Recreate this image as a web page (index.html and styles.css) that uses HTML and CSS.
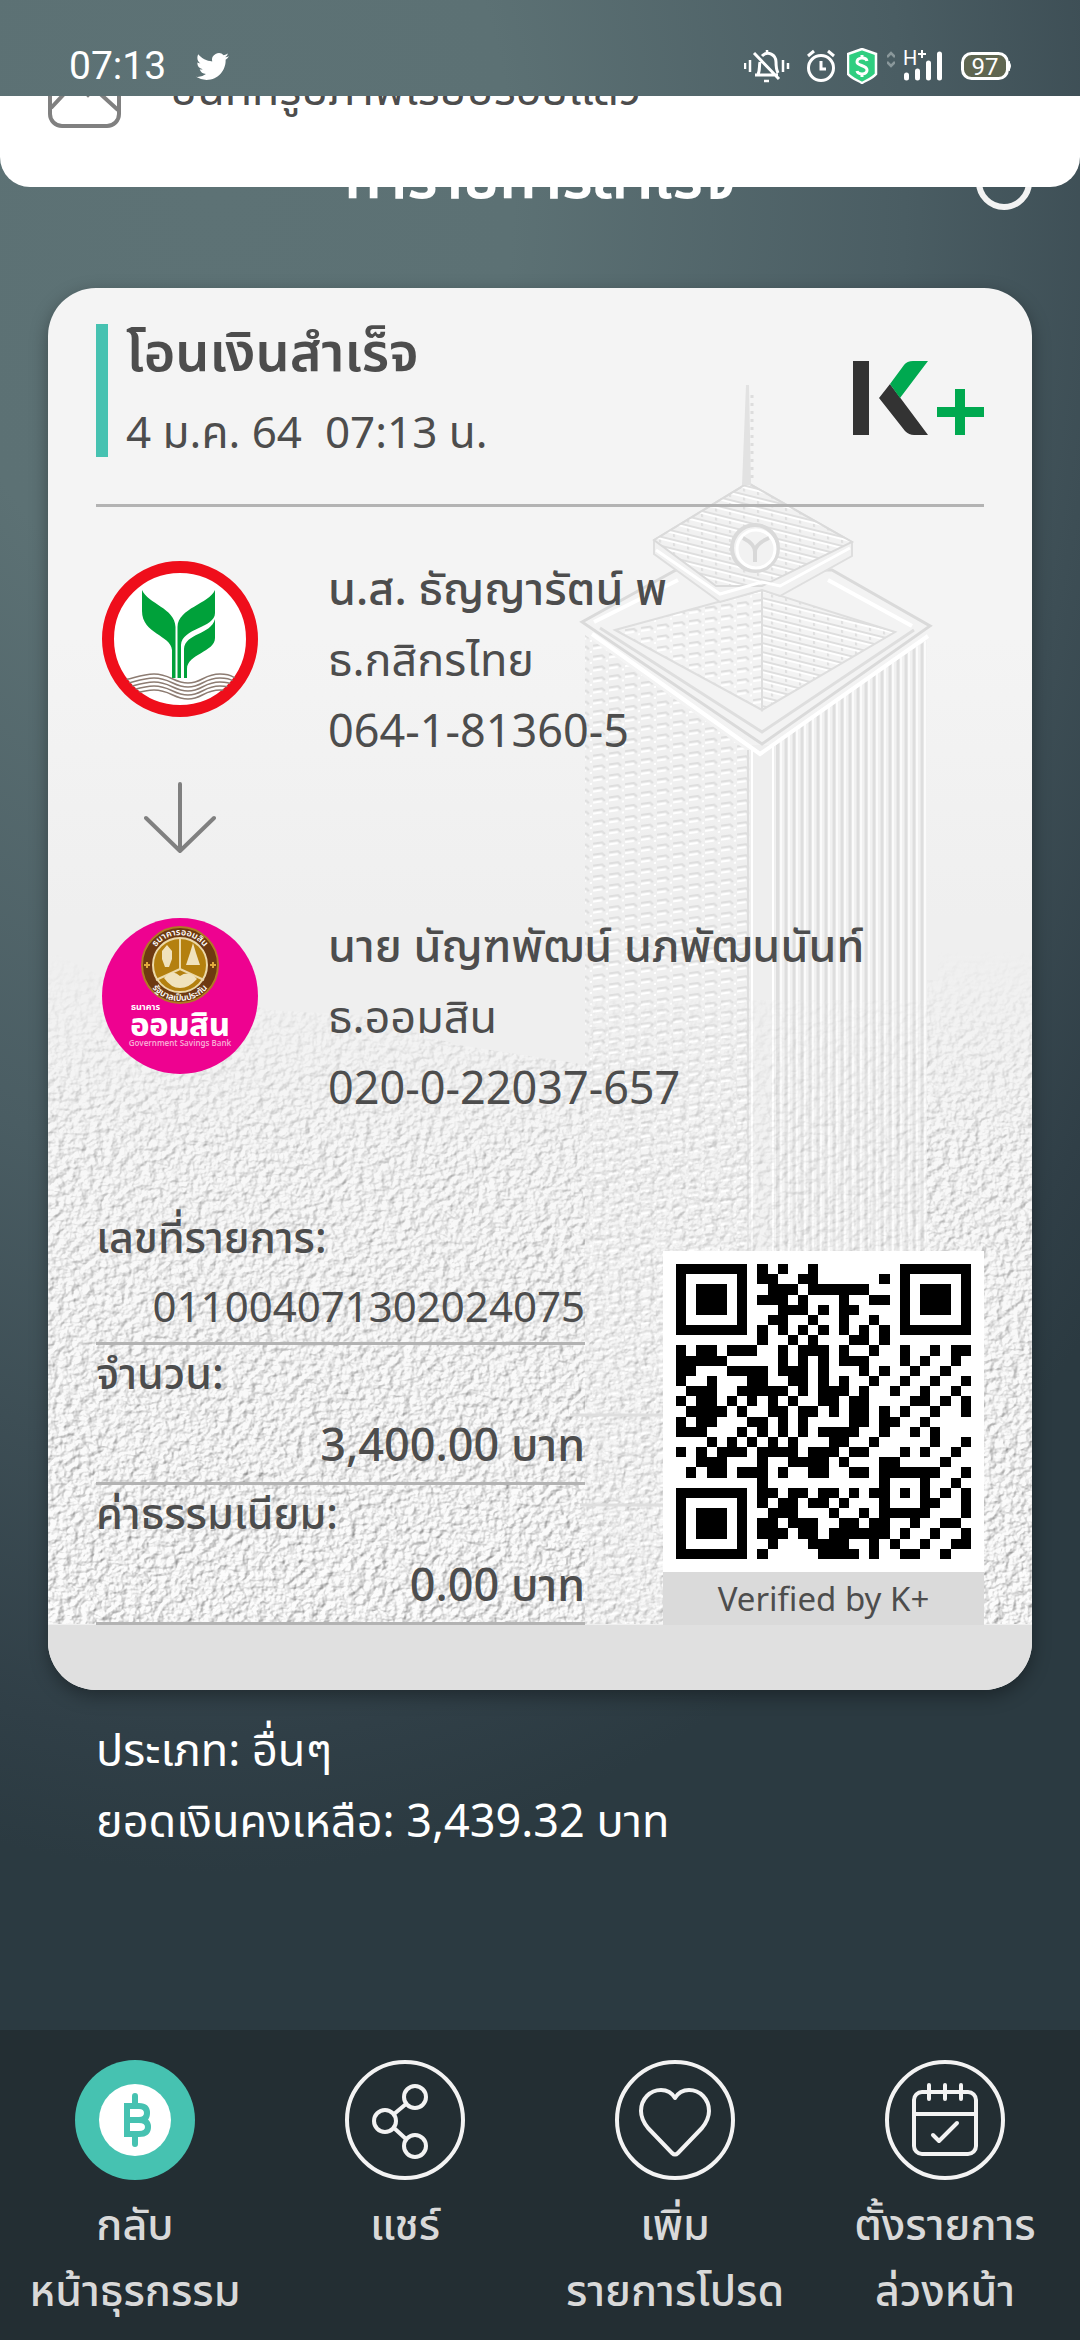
FILE: index.html
```html
<!DOCTYPE html>
<html lang="th">
<head>
    <meta charset="UTF-8">
    <meta name="viewport" content="width=device-width, initial-scale=1.0">
    <title>ทำรายการสำเร็จ</title>
    <link rel="stylesheet" href="styles.css">
</head>
<body>
    <div class="status-bar">
        <span class="clock">07:13</span>
        <svg class="bird" width="33" height="33" viewBox="0 0 24 24" fill="#fff"><path d="M23.95 4.57a10 10 0 0 1-2.82.77 4.96 4.96 0 0 0 2.16-2.72c-.95.55-2 .95-3.13 1.18a4.92 4.92 0 0 0-8.38 4.48C7.69 8.1 4.07 6.13 1.64 3.16a4.82 4.82 0 0 0-.67 2.48c0 1.7.87 3.21 2.19 4.1a4.9 4.9 0 0 1-2.23-.62v.06a4.92 4.92 0 0 0 3.95 4.83 5 5 0 0 1-2.21.08 4.94 4.94 0 0 0 4.6 3.42A9.87 9.87 0 0 1 0 19.54a13.99 13.99 0 0 0 7.55 2.21c9.05 0 14-7.5 14-13.98 0-.21 0-.42-.02-.63a9.94 9.94 0 0 0 2.46-2.55z"/></svg>
        <div class="status-icons">
            <svg width="55" height="36" viewBox="0 0 55 36" fill="none" stroke="#fff" stroke-width="3">
                <path d="M1 15v6M6 12v12M39 12v12M44 15v6M23 4V2M20 33h5" stroke-width="2.5"/>
                <path d="M11 27h23M14 26c2-3 1-8 2-12M18 8c6-6 14-1 14 6 0 5 0 7 2 11M10 5l25 26"/>
            </svg>
            <svg width="32" height="36" viewBox="0 0 32 36" fill="none" stroke="#fff" stroke-width="3">
                <circle cx="14" cy="20" r="12.500"/>
                <path d="M14 13v8h5M1 8l6-5M27 8l-6-5"/>
            </svg>
            <svg width="32" height="36" viewBox="0 0 32 36">
                <path d="M15 1l14 5v20c-3 4-9 6-14 9-5-3-11-5-14-9V6z" fill="#2fce80" stroke="#fff" stroke-width="2.500"/>
                <path d="M20 13c-1-4-10-4-10 1 0 4 10 3 10 8 0 5-9 5-10 1M15 7v3M15 26v3" fill="none" stroke="#fff" stroke-width="3"/>
            </svg>
            <svg width="8" height="36" viewBox="0 0 8 36" fill="none" stroke="#8a989b" stroke-width="2.500"><path d="M0 9l4-4 4 4M0 14l4 4 4-4"/></svg>
            <svg width="50" height="36" viewBox="0 0 50 36">
                <text x="0" y="17" class="network">H</text>
                <path d="M15 6h8M19 2v8" stroke="#fff" stroke-width="2"/>
                <path d="M3.500 27v3M14.500 23v7M25.500 15v15M36.500 6v24" stroke="#fff" stroke-width="5" stroke-linecap="round"/>
            </svg>
            <svg width="50" height="36" viewBox="0 0 50 36">
                <rect x="1.500" y="5.500" width="45" height="25" rx="9" fill="#5f6650" stroke="#fff" stroke-width="3"/>
                <path d="M48 13q3 5 0 10z" fill="#fff" stroke="#fff"/>
                <text x="24" y="27" text-anchor="middle" class="battery">97</text>
            </svg>
        </div>
    </div>

    <div class="toast">
        <svg width="74" height="72" viewBox="0 0 74 72" fill="none" stroke="#808080" stroke-width="4">
            <rect x="2" y="2" width="69" height="68" rx="12"/>
            <path d="M3 52L29 24q4-4 8 0l33 30M33 32l7 7 14-14"/>
        </svg>
        <span class="toast-text">บันทึกรูปภาพเรียบร้อยแล้ว</span>
    </div>

    <header class="page-header">
        <h1 class="page-title">ทำรายการสำเร็จ</h1>
        <button class="header-btn" aria-label="home"></button>
    </header>

    <main class="slip">
        <svg class="slip-art" viewBox="48 288 984 1336" preserveAspectRatio="xMidYMin slice">
            <defs>
                <filter id="emboss" x="0" y="0" width="100%" height="100%" color-interpolation-filters="sRGB">
                    <feTurbulence type="fractalNoise" baseFrequency="0.13 0.16" numOctaves="3" seed="4"/>
                    <feDiffuseLighting surfaceScale="2" diffuseConstant="1.09" lighting-color="#fff">
                        <feDistantLight azimuth="215" elevation="60"/>
                    </feDiffuseLighting>
                </filter>
                <linearGradient id="fade" x1="0" y1="0" x2="0" y2="1">
                    <stop offset="0" stop-color="#000"/>
                    <stop offset=".3" stop-color="#aaa"/>
                    <stop offset="1" stop-color="#fff"/>
                </linearGradient>
                <mask id="city"><path d="M48 950l60 30 100 10 60 20 90 5 100 30 130 20V980h350v-30h94v674H48z" fill="url(#fade)"/></mask>
                <pattern id="windows" width="16" height="11" patternUnits="userSpaceOnUse" patternTransform="skewY(-8)">
                    <path d="M1 3h9l3 3" fill="none" stroke="#dedede" stroke-width="2"/>
                    <path d="M1 6h9M14 9h2" fill="none" stroke="#fff" stroke-width="2"/>
                </pattern>
                <pattern id="columns" width="8" height="20" patternUnits="userSpaceOnUse">
                    <path d="M2 0v20" stroke="#dedede" stroke-width="3"/>
                    <path d="M5 0v20" stroke="#fbfbfb" stroke-width="2"/>
                </pattern>
                <pattern id="slats" width="14" height="9" patternUnits="userSpaceOnUse" patternTransform="skewY(14)">
                    <path d="M0 3h14M2 3v6" stroke="#dedede" stroke-width="2"/>
                    <path d="M0 5h14" stroke="#fff" stroke-width="2"/>
                </pattern>
            </defs>
            <rect x="48" y="900" width="984" height="724" filter="url(#emboss)" mask="url(#city)" opacity=".8"/>
            <!-- tower body -->
            <path d="M585 635l165 118v871H585z" fill="#efefef" opacity=".75"/>
            <path d="M585 635l165 118v871H585z" fill="url(#windows)"/>
            <path d="M775 742l152-102v984H775z" fill="#f1f1f1"/>
            <path d="M775 742l152-102v984H775z" fill="url(#columns)"/>
            <path d="M750 745h25v879h-25z" fill="#eee"/>
            <path d="M748 750v874M777 745v879" stroke="#dedede" stroke-width="2"/>
            <path d="M752 750v874M773 745v879" stroke="#fff" stroke-width="2"/>
            <rect x="585" y="1000" width="345" height="624" filter="url(#emboss)" mask="url(#city)" opacity=".4"/>
            <!-- roof -->
            <path d="M582 622l94-52h156l98 56-168 118z" fill="#f3f3f3" stroke="#dadada" stroke-width="3"/>
            <path d="M594 622l84-42M912 626l-84-46M592 634l168 120 168-118" fill="none" stroke="#fff" stroke-width="4"/>
            <path d="M600 628l162 104 152-102" fill="none" stroke="#dedede" stroke-width="3"/>
            <path d="M615 630l147-40v120z" fill="url(#windows)" stroke="#dedede" stroke-width="2"/>
            <path d="M895 632l-133-42v120z" fill="url(#slats)" stroke="#dedede" stroke-width="2"/>
            <path d="M654 540l94-57 104 59v14l-72 40-18-6-42 12-66-48z" fill="#f1f1f1" stroke="#dedede" stroke-width="2"/>
            <path d="M654 540l94-57 104 59-90 44h-46z" fill="url(#slats)" stroke="#dadada" stroke-width="2"/>
            <path d="M656 550l64 44 42-12 18 4 70-38" fill="none" stroke="#fff" stroke-width="3"/>
            <path d="M742 485l4-100h3l2 100z" fill="#e2e2e2"/>
            <path d="M752 395v88" stroke="#ddd" stroke-width="3" stroke-dasharray="3 5"/>
            <circle cx="755" cy="548" r="23" fill="#f2f2f2" stroke="#dadada" stroke-width="4"/>
            <circle cx="756" cy="549" r="19" fill="none" stroke="#fff" stroke-width="3"/>
            <path d="M755 562v-10q0-8-12-14M755 552q0-8 14-14" fill="none" stroke="#d8d8d8" stroke-width="4"/>
            <!-- podium -->
            <path d="M570 1415h370M580 1505h360" stroke="#dedede" stroke-width="3"/>
        </svg>

        <div class="slip-content">
            <div class="slip-header">
                <div class="slip-title">
                    <h2>โอนเงินสำเร็จ</h2>
                    <p>4 ม.ค. 64&nbsp; 07:13 น.</p>
                </div>
                <svg class="kplus" width="131" height="74" viewBox="0 0 131 74">
                    <path d="M0 0h16v74H0zM26 37l11-14 38 51H61q-5 0-9-4z" fill="#333"/>
                    <path d="M37 23L51 4q3-4 9-4h15L47 37zM102 28h10v18h19v10h-19v18h-10V56H84V46h18z" fill="#00a950"/>
                </svg>
            </div>

            <section class="account">
                <svg class="bank-logo" width="156" height="156" viewBox="0 0 156 156">
                    <clipPath id="disc"><circle cx="78" cy="78" r="67"/></clipPath>
                    <circle cx="78" cy="78" r="72" fill="#fff" stroke="#ef0e1b" stroke-width="12"/>
                    <path d="M40 29c6 14 33 18 33.500 37v51H70V89C69 74 40 73 40 50z" fill="#00a13a"/>
                    <path d="M113 29c-6 14-37 18-37.500 37v51H79V84c1-17 34-17 34-32z" fill="#00a13a"/>
                    <path d="M113 58v19c0 14-28 16-28 31v9h-3V88c1-16 27-14 31-30z" fill="#00a13a"/>
                    <g clip-path="url(#disc)" fill="none" stroke="#8d7c72" stroke-width="1.500">
                        <path d="M14 119c12 2 22-6 38-6s20 9 34 9 16-9 32-9 12 6 24 6"/>
                        <path d="M14 123c12 2 22-6 38-6s20 9 34 9 16-9 32-9 12 6 24 6"/>
                        <path d="M14 127c12 2 22-6 38-6s20 9 34 9 16-9 32-9 12 6 24 6"/>
                        <path d="M14 131c12 2 22-6 38-6s20 9 34 9 16-9 32-9 12 6 24 6"/>
                        <path d="M14 135c12 2 22-6 38-6s20 9 34 9 16-9 32-9 12 6 24 6"/>
                    </g>
                </svg>
                <div class="account-info">
                    <p class="account-name">น.ส. ธัญญารัตน์ พ</p>
                    <p>ธ.กสิกรไทย</p>
                    <p>064-1-81360-5</p>
                </div>
            </section>

            <div class="arrow">
                <svg width="72" height="72" viewBox="0 0 72 72" fill="none" stroke="#808080" stroke-width="4" stroke-linecap="round" stroke-linejoin="round"><path d="M36 2v67M2 36l34 33 34-33"/></svg>
            </div>

            <section class="account">
                <svg class="bank-logo" width="156" height="156" viewBox="0 0 156 156">
                    <circle cx="78" cy="78" r="78" fill="#ee0290"/>
                    <circle cx="78" cy="47" r="38" fill="#6e3a10" stroke="#b07a24" stroke-width="2"/>
                    <circle cx="78" cy="47" r="27" fill="#b4800f" stroke="#ecd9a8" stroke-width="2"/>
                    <path d="M78 20v31M78 51L54 62M78 51l24 11" stroke="#ecd9a8" stroke-width="2"/>
                    <path d="M65 27l5 6v8l-3 8h-4l-3-8v-8zM91 25l3 10 4 12H84l4-12zM62 60q8-10 16-2 9-6 17 3-8 9-17 9t-16-10z" fill="#f0e2bd"/>
                    <path d="M42 47h6M45 44v6M108 47h6M111 44v6" stroke="#e0a83c" stroke-width="2"/>
                    <path id="seal-top" d="M48 47a30 30 0 0 1 60 0" fill="none"/>
                    <path id="seal-bottom" d="M42 47a36 36 0 0 0 72 0" fill="none"/>
                    <text class="seal"><textPath href="#seal-top" startOffset="50%" text-anchor="middle">ธนาคารออมสิน</textPath></text>
                    <text class="seal"><textPath href="#seal-bottom" startOffset="50%" text-anchor="middle">รัฐบาลเป็นประกัน</textPath></text>
                    <text x="29" y="92" class="gsb-small">ธนาคาร</text>
                    <text x="78" y="118" text-anchor="middle" class="gsb-name">ออมสิน</text>
                    <text x="78" y="128" text-anchor="middle" class="gsb-en">Government Savings Bank</text>
                </svg>
                <div class="account-info">
                    <p class="account-name">นาย นัญฑพัฒน์ นภพัฒนนันท์</p>
                    <p>ธ.ออมสิน</p>
                    <p>020-0-22037-657</p>
                </div>
            </section>

            <section class="details">
                <dl class="detail-list">
                    <div class="detail-row">
                        <dt>เลขที่รายการ:</dt>
                        <dd class="ref-no">011004071302024075</dd>
                    </div>
                    <div class="detail-row">
                        <dt>จำนวน:</dt>
                        <dd>3,400.00 บาท</dd>
                    </div>
                    <div class="detail-row">
                        <dt>ค่าธรรมเนียม:</dt>
                        <dd>0.00 บาท</dd>
                    </div>
                </dl>
                <figure class="qr">
                    <svg class="qr-code" viewBox="0 0 29 29" shape-rendering="crispEdges" stroke="#000" fill="none">
                        <path transform="translate(0 .5)" d="
                            M0 0h7M8 0h1M10 0h1M13 0h1M22 0h7
                            M0 1h1M6 1h1M8 1h2M12 1h2M20 1h1M22 1h1M28 1h1
                            M0 2h1M2 2h3M6 2h1M9 2h3M13 2h6M22 2h1M24 2h3M28 2h1
                            M0 3h1M2 3h3M6 3h1M8 3h3M12 3h1M16 3h1M19 3h2M22 3h1M24 3h3M28 3h1
                            M0 4h1M2 4h3M6 4h1M10 4h3M14 4h1M16 4h2M22 4h1M24 4h3M28 4h1
                            M0 5h1M6 5h1M9 5h2M13 5h1M16 5h1M19 5h1M22 5h1M28 5h1
                            M0 6h7M8 6h1M10 6h1M12 6h1M14 6h1M16 6h1M18 6h1M20 6h1M22 6h7
                            M8 7h1M11 7h1M13 7h1M17 7h2M20 7h1
                            M0 8h1M2 8h2M5 8h3M10 8h1M12 8h3M16 8h1M19 8h1M22 8h1M25 8h1M27 8h2
                            M0 9h5M10 9h1M12 9h1M14 9h1M16 9h3M22 9h1M24 9h1M27 9h1
                            M0 10h2M5 10h4M10 10h3M14 10h1M18 10h1M20 10h1M23 10h1M26 10h1
                            M0 11h1M3 11h1M7 11h2M11 11h2M14 11h1M16 11h1M19 11h1M22 11h1M25 11h1M28 11h1
                            M1 12h3M6 12h5M12 12h1M14 12h3M18 12h1M21 12h1M24 12h1M27 12h1
                            M0 13h1M2 13h2M5 13h1M7 13h1M9 13h1M11 13h1M14 13h2M17 13h2M23 13h2M26 13h1M28 13h1
                            M1 14h4M6 14h1M9 14h2M12 14h2M15 14h1M17 14h2M20 14h1M22 14h1M25 14h1M28 14h1
                            M0 15h1M2 15h2M7 15h2M10 15h1M12 15h1M17 15h2M20 15h2M24 15h1
                            M0 16h3M6 16h1M8 16h1M10 16h1M12 16h1M14 16h4M20 16h1M23 16h1M25 16h1
                            M3 17h1M5 17h1M7 17h1M9 17h1M11 17h1M15 17h2M19 17h1M25 17h1M28 17h1
                            M0 18h1M2 18h1M4 18h3M8 18h4M13 18h3M17 18h2M22 18h1M24 18h1M27 18h1
                            M2 19h3M8 19h1M11 19h4M16 19h1M20 19h2M26 19h1
                            M1 20h1M3 20h2M6 20h3M10 20h1M13 20h2M17 20h2M20 20h6M28 20h1
                            M8 21h1M20 21h1M24 21h1M27 21h1
                            M0 22h7M8 22h2M11 22h2M14 22h2M17 22h1M19 22h2M22 22h1M24 22h1M26 22h1M28 22h1
                            M0 23h1M6 23h1M8 23h1M10 23h2M13 23h2M16 23h1M20 23h1M24 23h2M28 23h1
                            M0 24h1M2 24h3M6 24h1M9 24h3M15 24h1M18 24h1M20 24h5M28 24h1
                            M0 25h1M2 25h3M6 25h1M8 25h2M11 25h3M16 25h2M19 25h2M23 25h1M26 25h2
                            M0 26h1M2 26h3M6 26h1M8 26h3M12 26h2M15 26h6M22 26h1M25 26h1M28 26h1
                            M0 27h1M6 27h1M9 27h1M13 27h4M19 27h1M21 27h1M24 27h1M27 27h2
                            M0 28h7M8 28h1M14 28h4M19 28h1M22 28h2M26 28h1"/>
                    </svg>
                    <figcaption>Verified by K+</figcaption>
                </figure>
            </section>
        </div>
    </main>

    <section class="summary">
        <p>ประเภท: อื่นๆ</p>
        <p>ยอดเงินคงเหลือ: 3,439.32 บาท</p>
    </section>

    <nav class="bottom-nav">
        <button class="nav-item">
            <svg width="120" height="120" viewBox="0 0 120 120" fill="none" stroke="#46c2b1" stroke-width="6">
                <circle cx="60" cy="60" r="60" fill="#46c2b1" stroke="none"/>
                <circle cx="60" cy="60" r="36" fill="#fff" stroke="none"/>
                <path d="M52 46h12q8 0 8 7t-8 7H52h12q9 0 9 7t-9 7H52z"/>
                <path d="M60 36v8M60 76v8" stroke-linecap="round"/>
            </svg>
            <span>กลับ<br>หน้าธุรกรรม</span>
        </button>
        <button class="nav-item">
            <svg width="120" height="120" viewBox="0 0 120 120" fill="none" stroke="#f3f3f3" stroke-width="4">
                <circle cx="60" cy="60" r="58"/>
                <circle cx="40" cy="61" r="11"/>
                <circle cx="70" cy="37" r="11"/>
                <circle cx="70" cy="86" r="11"/>
                <path d="M49 54l12-10M49 68l12 11"/>
            </svg>
            <span>แชร์</span>
        </button>
        <button class="nav-item">
            <svg width="120" height="120" viewBox="0 0 120 120" fill="none" stroke="#f3f3f3" stroke-width="4" stroke-linejoin="round">
                <circle cx="60" cy="60" r="58"/>
                <path d="M60 38c3-5 8-8 14-8 11 0 20 9 20 21 0 7-3 12-7 17L63 93q-3 3-6 0L33 68c-4-5-7-10-7-17 0-12 9-21 20-21 6 0 11 3 14 8z"/>
            </svg>
            <span>เพิ่ม<br>รายการโปรด</span>
        </button>
        <button class="nav-item">
            <svg width="120" height="120" viewBox="0 0 120 120" fill="none" stroke="#f3f3f3" stroke-width="4" stroke-linecap="round" stroke-linejoin="round">
                <circle cx="60" cy="60" r="58"/>
                <rect x="29" y="32" width="62" height="62" rx="8"/>
                <path d="M29 54h62M44 25v14M60 25v14M76 25v14M48 75l6 6 18-18"/>
            </svg>
            <span>ตั้งรายการ<br>ล่วงหน้า</span>
        </button>
    </nav>
</body>
</html>
```
FILE: styles.css
```css
* {
    box-sizing: border-box;
}

body {
    margin: 0;
    min-height: 100vh;
    display: flex;
    flex-direction: column;
    position: relative;
    font-family: "Noto Sans", "Noto Sans Thai", sans-serif;
    font-size: 45px;
    line-height: 71px;
    color: #4d4d4d;
    background: radial-gradient(ellipse 110% 72% at 20% 8%, #5d7275 0%, #5c7174 25%, #4a5d63 58%, #303f47 92%, #2b3a41 100%);
}

h1, h2, p, dl, dd, figure {
    margin: 0;
}

svg {
    display: block;
}

button {
    border: none;
    background: none;
    padding: 0;
    font: inherit;
    color: inherit;
    cursor: pointer;
}

/* status bar */
.status-bar {
    height: 96px;
    padding: 36px 69px 0;
    display: flex;
    align-items: center;
    color: #fff;
}

.clock {
    font-family: Roboto, sans-serif;
    font-size: 39px;
}

.bird {
    margin-left: 30px;
}

.status-icons {
    margin-left: auto;
    display: flex;
    gap: 8px;
}

.network, .battery {
    font-family: Roboto, sans-serif;
    font-size: 20px;
    fill: #fff;
}

.battery {
    font-size: 24px;
}

.toast {
    position: absolute;
    top: 96px;
    left: 0;
    right: 0;
    height: 91px;
    padding: 0 48px 59px;
    display: flex;
    align-items: flex-end;
    gap: 48px;
    overflow: hidden;
    background: #fff;
    border-radius: 0 0 30px 30px;
}

.toast svg {
    flex: none;
}

.toast-text {
    line-height: 80px;
}

.page-header {
    height: 192px;
    padding: 58px 48px 0;
    display: flex;
    align-items: flex-start;
    justify-content: center;
    color: #fff;
}

.page-title {
    flex: 1;
    margin-left: 56px;
    text-align: center;
    font-size: 60px;
    font-weight: 600;
    line-height: 42px;
}

.header-btn {
    width: 56px;
    height: 56px;
    border: 6px solid #f3f3f3;
    border-radius: 50%;
}

/* slip card */
.slip {
    position: relative;
    margin: 0 48px;
    padding: 36px 48px 65px;
    background: linear-gradient(#f4f4f4 25%, #efefef 45%);
    border-radius: 48px;
    box-shadow: 0 6px 18px rgba(0, 0, 0, 0.35);
    overflow: hidden;
}

.slip::after {
    content: "";
    position: absolute;
    left: 0;
    right: 0;
    bottom: 0;
    height: 65px;
    background: #e0e0e0;
}

.slip-art {
    position: absolute;
    top: 0;
    left: 0;
    width: 100%;
}

.slip-content {
    position: relative;
}

.slip-header {
    display: flex;
    justify-content: space-between;
    align-items: center;
    padding-bottom: 47px;
    border-bottom: 3px solid #b3b3b3;
}

.slip-title {
    padding-left: 18px;
    border-left: 12px solid #46c2b1;
}

.slip-title h2 {
    font-size: 54px;
    font-weight: 600;
    line-height: 52px;
    margin-bottom: 29px;
}

.slip-title p {
    font-size: 44px;
    line-height: 52px;
}

.kplus {
    margin-top: 14px;
}

.account {
    display: flex;
    align-items: flex-start;
    gap: 70px;
    padding-left: 6px;
}

.slip-header + .account {
    margin-top: 45px;
}

.bank-logo {
    flex: none;
    margin-top: 9px;
}

.account-name {
    font-weight: 500;
}

.arrow {
    width: 168px;
    padding: 17px 0 55px;
    display: flex;
    justify-content: center;
}

.seal {
    font-size: 9px;
    font-weight: 600;
    fill: #fff;
}

.gsb-small {
    font-size: 9px;
    font-weight: 700;
    fill: #fff;
}

.gsb-name {
    font-size: 32px;
    font-weight: 800;
    fill: #fff;
}

.gsb-en {
    font-size: 8px;
    font-weight: 600;
    fill: #f9a8d4;
}

/* details and qr */
.details {
    margin-top: 87px;
    display: flex;
    justify-content: space-between;
    align-items: flex-end;
}

.detail-list {
    flex: 1;
    margin-right: 78px;
}

.detail-row {
    border-bottom: 3px solid #b3b3b3;
}

.detail-row dt {
    font-weight: 500;
    font-size: 43px;
    line-height: 56px;
}

.detail-row dd {
    padding-top: 5px;
    text-align: right;
    font-weight: 500;
    line-height: 76px;
}

.detail-row .ref-no {
    font-size: 42px;
    font-weight: 400;
    line-height: 72px;
}

.qr {
    width: 321px;
    background: #fff;
}

.qr-code {
    width: 295px;
    margin: 0 auto;
    padding: 13px 0;
    box-sizing: content-box;
}

.qr figcaption {
    font-size: 33px;
    line-height: 53px;
    text-align: center;
    background: #dadada;
}

.summary {
    padding: 23px 96px;
    color: #fff;
}

/* bottom navigation */
.bottom-nav {
    margin-top: auto;
    padding: 30px 0 17px;
    display: flex;
    background: #232e33;
}

.nav-item {
    flex: 1 1 0;
    display: flex;
    flex-direction: column;
    align-items: center;
    gap: 11px;
    font-size: 43px;
    font-weight: 500;
    line-height: 66px;
    color: #d9d9d9;
}

.nav-item span {
    white-space: nowrap;
}
```
